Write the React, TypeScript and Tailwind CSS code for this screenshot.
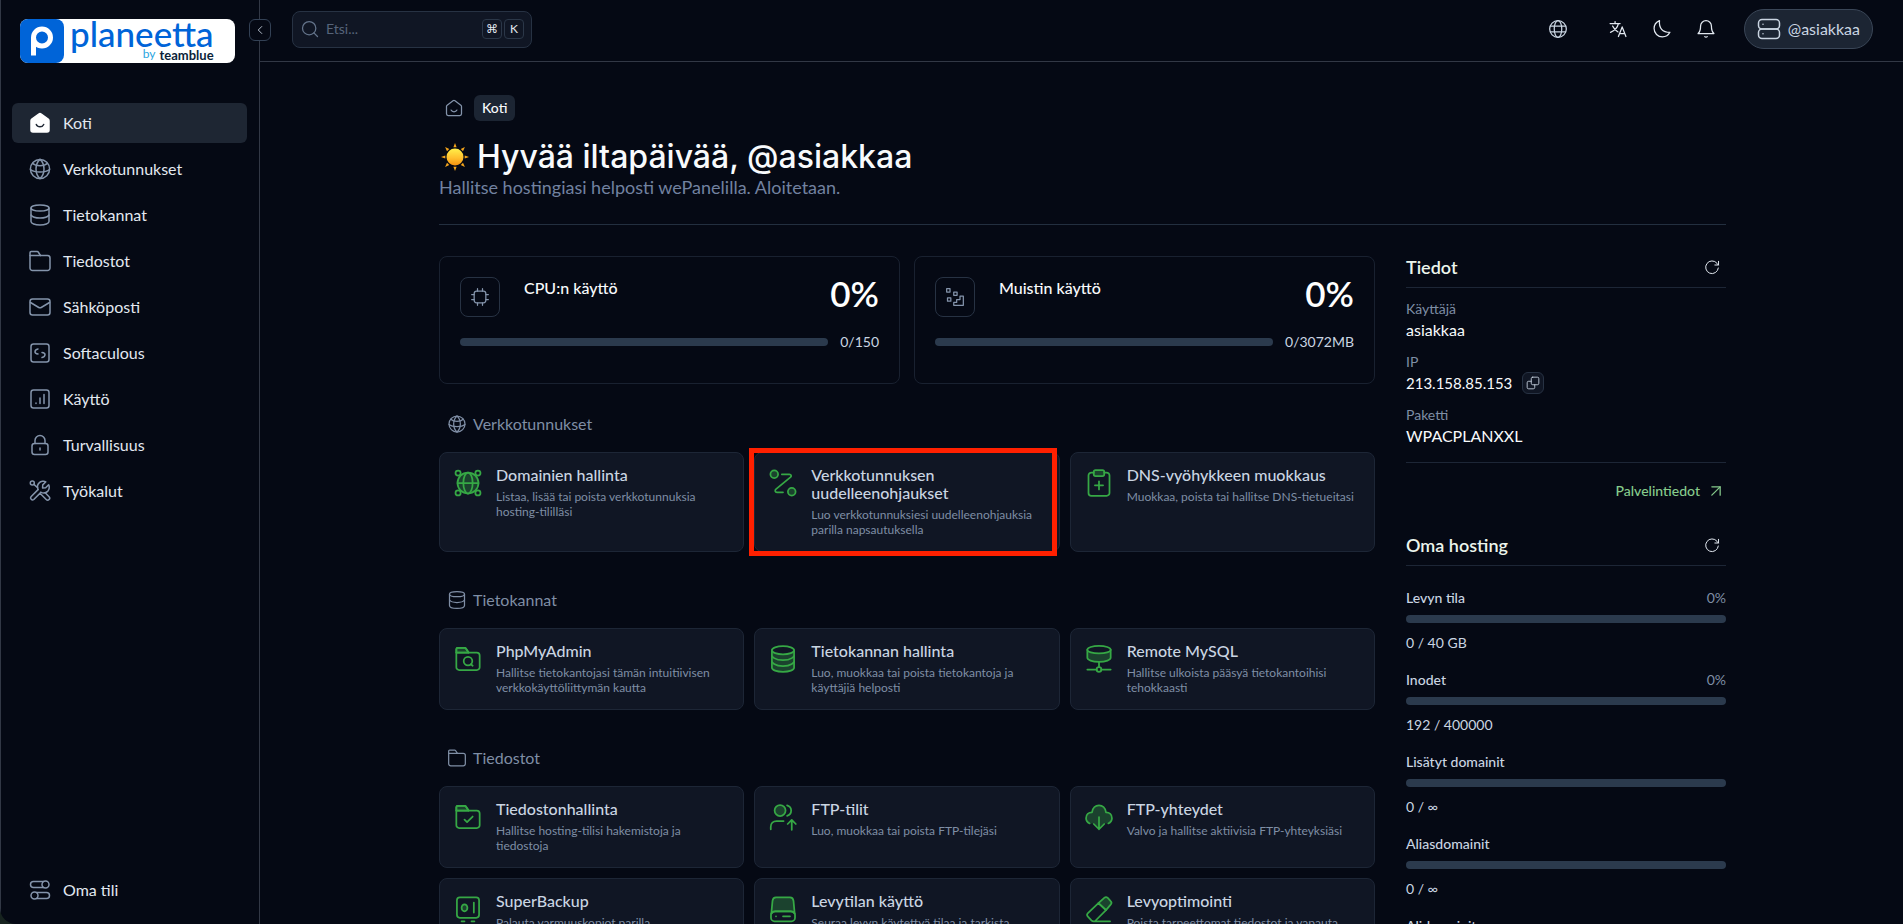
import { ReactNode } from 'react';
import { ArrowUpRight, ChevronLeft, Search } from 'lucide-react';

type IconProps = { className?: string };

// Shared stroke icon wrapper, everything is drawn on a 24x24 grid
function Icon({ className = 'size-6', children }: { className?: string; children: ReactNode }) {
  return (
    <svg
      viewBox="0 0 24 24"
      fill="none"
      stroke="currentColor"
      strokeWidth="1.5"
      strokeLinecap="round"
      strokeLinejoin="round"
      aria-hidden="true"
      className={`shrink-0 ${className}`}
    >
      {children}
    </svg>
  );
}

const HomeIcon = ({ className }: IconProps) => (
  <Icon className={className}>
    <path d="M3 10.2a2 2 0 0 1 .8-1.6l7-5.2a2 2 0 0 1 2.4 0l7 5.2a2 2 0 0 1 .8 1.6V19a2 2 0 0 1-2 2H5a2 2 0 0 1-2-2z" />
    <path d="M8.5 14.5s1 2 3.5 2 3.5-2 3.5-2" />
  </Icon>
);

const HomeSolidIcon = ({ className }: IconProps) => (
  <Icon className={className}>
    <path
      fill="currentColor"
      d="M3 9.8a2 2 0 0 1 .8-1.6l7-5.2a2 2 0 0 1 2.4 0l7 5.2a2 2 0 0 1 .8 1.6V19a2 2 0 0 1-2 2H5a2 2 0 0 1-2-2z"
    />
    <path stroke="#1e2633" d="M8.3 13.5s1 2.3 3.7 2.3 3.7-2.3 3.7-2.3" />
  </Icon>
);

const GlobeIcon = ({ className }: IconProps) => (
  <Icon className={className}>
    <circle cx="12" cy="12" r="9.6" />
    <path d="M2.5 12.5s3 2.5 9.5 2.5 9.5-2.5 9.5-2.5M4.6 6.3S7 8.8 12 8.8s7.4-2.5 7.4-2.5" />
    <path d="M12 2.4S8 6 8 12s4 9.6 4 9.6M12 2.4S16 6 16 12s-4 9.6-4 9.6" />
  </Icon>
);

const WorldIcon = ({ className }: IconProps) => (
  <Icon className={className}>
    <circle cx="12" cy="12" r="10" />
    <ellipse cx="12" cy="12" rx="4.5" ry="10" />
    <path d="M3 8.5h18M3 15.5h18" />
  </Icon>
);

const DatabaseIcon = ({ className }: IconProps) => (
  <Icon className={className}>
    <ellipse cx="12" cy="5" rx="9" ry="3" />
    <path d="M3 5v13.5C3 20.5 7 22 12 22s9-1.5 9-3.5V5" />
    <path d="M3 12s2 3 9 3 9-3 9-3" />
  </Icon>
);

const FolderIcon = ({ className, children }: IconProps & { children?: ReactNode }) => (
  <Icon className={className}>
    <path d="M2 6.5h17.5A2.5 2.5 0 0 1 22 9v10a2.5 2.5 0 0 1-2.5 2.5h-15A2.5 2.5 0 0 1 2 19z" />
    <path d="M2 6.5V3.7c0-.7.5-1.2 1.2-1.2h6c.4 0 .8.2 1 .5l2.3 3.5" />
    {children}
  </Icon>
);

const MailIcon = ({ className }: IconProps) => (
  <Icon className={className}>
    <rect x="2" y="4" width="20" height="16" rx="2.5" />
    <path d="m2.5 7.5 8.3 5a2.4 2.4 0 0 0 2.4 0l8.3-5" />
  </Icon>
);

const CodeIcon = ({ className }: IconProps) => (
  <Icon className={className}>
    <rect x="3" y="3" width="18" height="18" rx="2.5" />
    <path d="M10 8c-1.5.3-3 1.5-3 3 0 1.2 1.5 1.8 3 2M14 16.5c1.5-.3 3-1.5 3-3 0-1.2-1.5-1.8-3-2" />
  </Icon>
);

const ChartIcon = ({ className }: IconProps) => (
  <Icon className={className}>
    <rect x="3" y="3" width="18" height="18" rx="2.5" />
    <path d="M8 16.5V16M12 16.5V11M16 16.5V7.5" />
  </Icon>
);

const LockIcon = ({ className }: IconProps) => (
  <Icon className={className}>
    <rect x="4" y="10.5" width="16" height="11" rx="2.5" />
    <path d="M7 10.5V7.5a5 5 0 0 1 10 0v3M12 15v2" />
  </Icon>
);

const ToolsIcon = ({ className }: IconProps) => (
  <Icon className={className}>
    <path d="M10.05 10.6 3 17.7a2 2 0 0 0 2.8 2.8l7.1-7.1M17.2 13.8l3.9 3.9a2 2 0 0 1-2.9 2.8L12 14.3" />
    <circle cx="4.3" cy="4" r="2" />
    <path d="m5.8 5.4 3.9 3.4" />
    <path d="M10.05 10.6c-.8-2.1-.7-5 1.1-6.7 1.7-1.7 4.9-2.1 6.7-1.1l-3.1 3.1-.2 3.1 3.1-.3 3-3c1.1 1.8.7 5-1 6.7-1.8 1.7-4.6 1.9-6.8 1" />
  </Icon>
);

const AccountIcon = ({ className }: IconProps) => (
  <Icon className={className}>
    <path d="M15.5 3.5h-10a3 3 0 0 0 0 6h10M8.5 14.5h10a3 3 0 0 1 0 6h-10" />
    <circle cx="17.5" cy="6.5" r="3.5" />
    <circle cx="6.5" cy="17.5" r="3.5" />
  </Icon>
);

const TranslateIcon = ({ className }: IconProps) => (
  <Icon className={className}>
    <path d="M2.5 5.5h12M8.5 3v2.5M12.5 5.5c-1 4.5-5 8.5-9.5 10.5M5.5 8.5c1.3 3 4 5.5 6.5 7" />
    <path d="m12.5 21 4.5-11.5L21.5 21M14 17.5h6" />
  </Icon>
);

const MoonIcon = ({ className }: IconProps) => (
  <Icon className={className}>
    <path d="M2.5 11.5c0 5.5 4.5 10 10 10 3.9 0 7.3-2.2 9-5.5-8.9 0-13.5-5-12.5-14-4 1.7-6.5 5.3-6.5 9.5z" />
  </Icon>
);

const BellIcon = ({ className }: IconProps) => (
  <Icon className={className}>
    <path d="M12 2a6.5 6.5 0 0 0-6.5 6.5c0 6.5-3 9-3 9h19s-3-2.5-3-9A6.5 6.5 0 0 0 12 2z" />
    <path d="M10.5 21.2s.5.5 1.5.5 1.5-.5 1.5-.5" />
  </Icon>
);

const ServerIcon = ({ className }: IconProps) => (
  <Icon className={className}>
    <rect x="1.5" y="2.5" width="21" height="9.5" rx="3.5" />
    <rect x="1.5" y="12" width="21" height="9.5" rx="3.5" />
    <path d="M6 7.3h.01M6 16.8h.01" />
  </Icon>
);

const RefreshIcon = ({ className }: IconProps) => (
  <Icon className={className}>
    <path d="M21.5 13.5A9.5 9.5 0 1 1 19.5 6.5L21.5 9" />
    <path d="M21.8 3.5V9h-5.5" />
  </Icon>
);

const CopyIcon = ({ className }: IconProps) => (
  <Icon className={className}>
    <rect x="9" y="2" width="13" height="13" rx="2.5" />
    <path d="M9 9H4.5A2.5 2.5 0 0 0 2 11.5v8A2.5 2.5 0 0 0 4.5 22h8a2.5 2.5 0 0 0 2.5-2.5V15" />
  </Icon>
);

const CpuIcon = ({ className }: IconProps) => (
  <Icon className={className}>
    <rect x="5" y="5" width="14" height="14" rx="3" />
    <path d="M9 5V2M15 5V2M9 22v-3M15 22v-3M5 9H2M5 15H2M22 9h-3M22 15h-3" />
  </Icon>
);

const MemoryIcon = ({ className }: IconProps) => (
  <Icon className={className}>
    <path d="M2 2h4v4H2zM10.5 6h4v4h-4zM3 13h4v4H3z" />
    <path d="M10.5 22v-3.5H14V15h4v-4h4v11z" />
  </Icon>
);

const soft = { fill: 'currentColor', fillOpacity: 0.3 };

const DomainsIcon = () => (
  <Icon className="size-7">
    <circle cx="12" cy="12" r="9" {...soft} />
    <ellipse cx="12" cy="12" rx="4" ry="9" />
    <path d="M3 12h18" />
    <g fill="#101624">
      <circle cx="3.5" cy="3.5" r="2.2" />
      <circle cx="20.5" cy="3.5" r="2.2" />
      <circle cx="3.5" cy="20.5" r="2.2" />
      <circle cx="20.5" cy="20.5" r="2.2" />
    </g>
  </Icon>
);

const RedirectIcon = () => (
  <Icon className="size-7">
    <circle cx="4.5" cy="4.5" r="3.3" {...soft} />
    <circle cx="19.5" cy="19.5" r="3.3" {...soft} />
    <path d="M11 4.5h6.5c1.5 0 2 1.5 1 2.5L6 17.3c-1.2 1-.8 2.7.8 2.7H12" />
  </Icon>
);

const DnsIcon = () => (
  <Icon className="size-7">
    <path d="M7.5 3h-2A2.5 2.5 0 0 0 3 5.5v15A2.5 2.5 0 0 0 5.5 23h13a2.5 2.5 0 0 0 2.5-2.5v-15A2.5 2.5 0 0 0 18.5 3h-2" />
    <rect x="7.5" y="1" width="9" height="5" rx="1.5" {...soft} />
    <path d="M12 10.5v7M8.5 14h7" />
  </Icon>
);

const FolderTab = () => <path d="M2 6.5V3.7c0-.7.5-1.2 1.2-1.2h6c.4 0 .8.2 1 .5l2.3 3.5z" {...soft} />;

const PhpMyAdminIcon = () => (
  <FolderIcon className="size-7">
    <FolderTab />
    <circle cx="12" cy="13.8" r="3.7" />
    <path d="m14.5 16.5 1.5 1.3" />
  </FolderIcon>
);

const FileManagerIcon = () => (
  <FolderIcon className="size-7">
    <FolderTab />
    <path d="m9 14.2 2.2 2.2 4.8-4.8" />
  </FolderIcon>
);

const DatabasesIcon = () => (
  <Icon className="size-7">
    <path d="M2.5 4.5v15c0 2 4 3.5 9.5 3.5s9.5-1.5 9.5-3.5v-15" {...soft} />
    <ellipse cx="12" cy="4.5" rx="9.5" ry="3.5" fill="#101624" />
    <path d="M2.5 9.5s2 3.5 9.5 3.5 9.5-3.5 9.5-3.5M2.5 14.5s2 3.5 9.5 3.5 9.5-3.5 9.5-3.5" />
  </Icon>
);

const RemoteMysqlIcon = () => (
  <Icon className="size-7">
    <path d="M2 4v7c0 1.7 4 3.5 10 3.5s10-1.8 10-3.5V4" {...soft} />
    <ellipse cx="12" cy="4" rx="10" ry="3.2" fill="#101624" />
    <path d="M12 14.5V19M2 21h8M14 21h8" />
    <circle cx="12" cy="21" r="2" />
  </Icon>
);

const FtpAccountsIcon = () => (
  <Icon className="size-7">
    <circle cx="9.5" cy="6.5" r="4.7" {...soft} />
    <path d="M15.5 2s3.5 1 3.5 4.5-3.5 4.5-3.5 4.5M1.5 22.5v-2c0-3 2-5 5-5h6" />
    <path d="M19.5 23v-8.5M16 18l3.5-3.5L23 18" />
  </Icon>
);

const FtpConnectionsIcon = () => (
  <Icon className="size-7">
    <path
      d="M4 17.5C2 16.5.9 15 .9 13c0-3 2.1-5 5.1-5 .5-3.7 3-6 6-6s5.5 2.3 6 6c3 0 5.1 2 5.1 5 0 2-1.1 3.5-3.1 4.5h-3.500L12 22.500 7.500 17.500z"
      fill="currentColor"
      fillOpacity="0.3"
      stroke="none"
    />
    <path d="M4 17.5C2 16.5.9 15 .9 13c0-3 2.1-5 5.1-5 .5-3.7 3-6 6-6s5.5 2.3 6 6c3 0 5.1 2 5.1 5 0 2-1.1 3.5-3.1 4.5" />
    <path d="M12 12v10.5M7.5 18l4.5 4.5 4.5-4.5" />
  </Icon>
);

const BackupIcon = () => (
  <Icon className="size-7">
    <rect x="2.5" y="2" width="19" height="17.5" rx="2.5" />
    <path d="M17 6.5V15M6.5 22.5H9M15 22.5h2.5" />
    <ellipse cx="9" cy="11" rx="2.5" ry="3" {...soft} />
  </Icon>
);

const DiskUsageIcon = () => (
  <Icon className="size-7">
    <path d="M2 16 3 5c.2-1.8 1.3-3 3-3h12c1.7 0 2.8 1.2 3 3l1 11c-1-1.5-2-2-3.5-2h-13C4 14 3 14.5 2 16z" {...soft} />
    <rect x="1.7" y="14" width="20.6" height="8.5" rx="3" />
    <path d="M6 18.3h.01M12 18.3h6" />
  </Icon>
);

const OptimizeIcon = () => (
  <Icon className="size-7">
    <path d="m11.5 7 5-4.5c1-.9 2-.9 3 0L22 5.2c1 1 1 2 0 3L18 13z" {...soft} />
    <path d="M11.5 7l-9 8.5c-1 1-1 2 0 3l3 3.2c.5.5 1 .8 1.8.8h1.2L18 13zM8.5 22.5h13" />
  </Icon>
);

const SunIcon = ({ className }: IconProps) => (
  <svg viewBox="0 0 28 28" aria-hidden="true" className={`shrink-0 ${className}`}>
    <defs>
      <linearGradient id="sunFill" x1="0" y1="0" x2="0" y2="1">
        <stop offset="0" stopColor="#fff04a" />
        <stop offset="0.55" stopColor="#ffc02e" />
        <stop offset="1" stopColor="#f5920f" />
      </linearGradient>
    </defs>
    {[0, 45, 90, 135, 180, 225, 270, 315].map((angle) => (
      <path key={angle} d="M14 0l1.6 4.3h-3.2z" fill="#f5a51c" transform={`rotate(${angle} 14 14)`} />
    ))}
    <circle cx="14" cy="14" r="8.5" fill="url(#sunFill)" />
  </svg>
);

const navItems = [
  { label: 'Koti', icon: HomeSolidIcon, active: true },
  { label: 'Verkkotunnukset', icon: GlobeIcon },
  { label: 'Tietokannat', icon: DatabaseIcon },
  { label: 'Tiedostot', icon: FolderIcon },
  { label: 'Sähköposti', icon: MailIcon },
  { label: 'Softaculous', icon: CodeIcon },
  { label: 'Käyttö', icon: ChartIcon },
  { label: 'Turvallisuus', icon: LockIcon },
  { label: 'Työkalut', icon: ToolsIcon },
];

const stats = [
  { title: 'CPU:n käyttö', percent: 0, usage: '0/150', icon: CpuIcon },
  { title: 'Muistin käyttö', percent: 0, usage: '0/3072MB', icon: MemoryIcon },
];

const sections = [
  {
    title: 'Verkkotunnukset',
    icon: GlobeIcon,
    tools: [
      { title: 'Domainien hallinta', text: 'Listaa, lisää tai poista verkkotunnuksia hosting-tililläsi', icon: DomainsIcon },
      {
        title: 'Verkkotunnuksen uudelleenohjaukset',
        text: 'Luo verkkotunnuksiesi uudelleenohjauksia parilla napsautuksella',
        icon: RedirectIcon,
        highlighted: true,
      },
      { title: 'DNS-vyöhykkeen muokkaus', text: 'Muokkaa, poista tai hallitse DNS-tietueitasi', icon: DnsIcon },
    ],
  },
  {
    title: 'Tietokannat',
    icon: DatabaseIcon,
    tools: [
      { title: 'PhpMyAdmin', text: 'Hallitse tietokantojasi tämän intuitiivisen verkkokäyttöliittymän kautta', icon: PhpMyAdminIcon },
      { title: 'Tietokannan hallinta', text: 'Luo, muokkaa tai poista tietokantoja ja käyttäjiä helposti', icon: DatabasesIcon },
      { title: 'Remote MySQL', text: 'Hallitse ulkoista pääsyä tietokantoihisi tehokkaasti', icon: RemoteMysqlIcon },
    ],
  },
  {
    title: 'Tiedostot',
    icon: FolderIcon,
    tools: [
      { title: 'Tiedostonhallinta', text: 'Hallitse hosting-tilisi hakemistoja ja tiedostoja', icon: FileManagerIcon },
      { title: 'FTP-tilit', text: 'Luo, muokkaa tai poista FTP-tilejäsi', icon: FtpAccountsIcon },
      { title: 'FTP-yhteydet', text: 'Valvo ja hallitse aktiivisia FTP-yhteyksiäsi', icon: FtpConnectionsIcon },
      { title: 'SuperBackup', text: 'Palauta varmuuskopiot parilla napsautuksella', icon: BackupIcon },
      { title: 'Levytilan käyttö', text: 'Seuraa levyn käytettyä tilaa ja tarkista tiedostot', icon: DiskUsageIcon },
      { title: 'Levyoptimointi', text: 'Poista tarpeettomat tiedostot ja vapauta tilaa', icon: OptimizeIcon },
    ],
  },
];

const quotas = [
  { label: 'Levyn tila', value: '0 / 40 GB', percent: 0 },
  { label: 'Inodet', value: '192 / 400000', percent: 0 },
  { label: 'Lisätyt domainit', value: '0 / ∞' },
  { label: 'Aliasdomainit', value: '0 / ∞' },
  { label: 'Alidomainit', value: '0 / ∞' },
];

function ProgressBar({ label, percent = 0 }: { label: string; percent?: number }) {
  return (
    <div
      role="progressbar"
      aria-label={label}
      aria-valuenow={percent}
      className="h-2 w-full overflow-hidden rounded-full bg-[#2b3a4d]"
    >
      <div className="h-full bg-[#36a845]" style={{ width: `${percent}%` }} />
    </div>
  );
}

function Logo() {
  return (
    <a href="#" className="flex h-11 w-[215px] rounded-lg bg-white">
      <span className="flex w-11 shrink-0 items-center justify-center rounded-lg bg-[#0064d8]">
        <svg viewBox="0 0 44 44" fill="none" stroke="#fff" strokeWidth="5" aria-hidden="true" className="size-11">
          <circle cx="22" cy="18.5" r="8.5" />
          <path d="M13.5 18.5V36.5" />
        </svg>
      </span>
      <span className="flex flex-col items-end pl-1.5">
        <span className="text-[35px] leading-[29px] font-medium text-[#0064d8]">planeetta</span>
        <span className="flex gap-1 text-[13px] leading-[14px] font-bold text-[#0b1f3a]">
          <span className="text-xs leading-3 font-normal text-[#2aa5e0]">by</span>
          teamblue
        </span>
      </span>
    </a>
  );
}

function Sidebar() {
  return (
    <aside className="relative flex w-[260px] shrink-0 flex-col border-x border-[#323845]">
      <div className="pt-[19px] pl-[19px]">
        <Logo />
      </div>
      <button
        type="button"
        aria-label="Piilota valikko"
        className="absolute top-[19px] -right-3 z-10 flex size-[22px] items-center justify-center rounded-md border border-[#334155] bg-[#050914] text-slate-300"
      >
        <ChevronLeft className="size-3.5" strokeWidth={1.5} />
      </button>

      <nav className="mt-10 flex flex-col gap-1.5 pr-3 pl-[11px]">
        {navItems.map(({ label, icon: NavIcon, active }) => (
          <a
            key={label}
            href="#"
            className={`flex h-10 items-center gap-[11px] rounded-md pl-4 text-base text-slate-200 ${active ? 'bg-[#1e2633]' : ''}`}
          >
            <NavIcon className={active ? 'size-6 text-white' : 'size-6 text-[#8494ab]'} />
            {label}
          </a>
        ))}
      </nav>

      <div className="mt-auto pr-3 pb-3.5 pl-[11px]">
        <a href="#" className="flex h-10 items-center gap-[11px] pl-4 text-base text-slate-200">
          <AccountIcon className="size-6 text-[#8494ab]" />
          Oma tili
        </a>
      </div>
    </aside>
  );
}

function Header() {
  return (
    <header className="flex h-[62px] shrink-0 items-center justify-between border-b border-[#323845] pr-[30px] pb-[3px] pl-8">
      <div className="flex h-[37px] w-60 items-center rounded-lg border border-[#273243] bg-[#101624] px-[7px]">
        <Search className="size-5 shrink-0 text-[#64748b]" strokeWidth={1.5} />
        <input
          type="search"
          aria-label="Etsi"
          placeholder="Etsi..."
          className="ml-1.5 w-full min-w-0 bg-transparent text-sm text-slate-200 outline-none placeholder:text-[#56647a]"
        />
        <span className="flex gap-0.5">
          <kbd className="flex size-5 items-center justify-center rounded border border-[#2b3748] font-[Lato,'DejaVu_Sans',sans-serif] text-xs text-slate-200">⌘</kbd>
          <kbd className="flex size-5 items-center justify-center rounded border border-[#2b3748] font-[Lato,sans-serif] text-xs text-slate-200">K</kbd>
        </span>
      </div>

      <div className="flex items-center text-slate-200">
        <button type="button" aria-label="Sivusto" className="text-slate-300">
          <WorldIcon className="size-5" />
        </button>
        <button type="button" aria-label="Kieli" className="ml-10">
          <TranslateIcon className="size-5" />
        </button>
        <button type="button" aria-label="Tumma tila" className="ml-6">
          <MoonIcon className="size-5" />
        </button>
        <button type="button" aria-label="Ilmoitukset" className="ml-6">
          <BellIcon className="size-5" />
        </button>
        <button
          type="button"
          className="ml-7 flex h-10 items-center gap-[7px] rounded-full border border-[#3a4657] bg-[#1c2533] px-3 text-base text-slate-300"
        >
          <ServerIcon className="size-6" />
          @asiakkaa
        </button>
      </div>
    </header>
  );
}

function StatCard({ title, percent, usage, icon: StatIcon }: (typeof stats)[number]) {
  return (
    <div className="rounded-lg border border-[#192130] px-5 pt-5 pb-8">
      <div className="flex h-10 items-start">
        <span className="flex size-10 items-center justify-center rounded-lg border border-[#273243] text-[#8494ab]">
          <StatIcon className="size-5" />
        </span>
        <h2 className="ml-6 text-base leading-[22px] font-medium text-slate-50">{title}</h2>
        <span className="ml-auto text-[35px] leading-8 font-semibold text-white">{percent}%</span>
      </div>
      <div className="mt-4 flex items-center gap-3 text-sm leading-[18px] text-slate-300">
        <ProgressBar label={title} percent={percent} />
        {usage}
      </div>
    </div>
  );
}

function Details() {
  return (
    <section>
      <div className="flex items-center justify-between border-b border-[#1d2636] pr-1.5 pb-[9px]">
        <h2 className="text-lg leading-[22px] font-semibold text-[#ecf5ec]">Tiedot</h2>
        <button type="button" aria-label="Päivitä tiedot" className="text-slate-200">
          <RefreshIcon className="size-4" />
        </button>
      </div>
      <dl className="mt-[11px] flex flex-col gap-[11px] border-b border-[#1d2636] pb-[15px]">
        <div>
          <dt className="text-sm leading-5 text-[#7f8ea5]">Käyttäjä</dt>
          <dd className="text-base leading-[22px] text-slate-50">asiakkaa</dd>
        </div>
        <div>
          <dt className="text-sm leading-5 text-[#7f8ea5]">IP</dt>
          <dd className="flex items-center gap-2.5 text-[15px] leading-[22px] text-slate-50">
            213.158.85.153
            <button
              type="button"
              aria-label="Kopioi IP"
              className="flex size-[22px] items-center justify-center rounded-md border border-[#273243] bg-[#101624] text-slate-300"
            >
              <CopyIcon className="size-3.5" />
            </button>
          </dd>
        </div>
        <div>
          <dt className="text-sm leading-5 text-[#7f8ea5]">Paketti</dt>
          <dd className="text-base leading-[22px] text-slate-50">WPACPLANXXL</dd>
        </div>
      </dl>
      <a href="#" className="mt-[18px] flex items-center justify-end gap-1.5 text-sm leading-5 font-medium text-[#86cb8c]">
        Palvelintiedot
        <ArrowUpRight className="size-5" strokeWidth={1.5} />
      </a>
    </section>
  );
}

function Hosting() {
  return (
    <section className="mt-[33px]">
      <div className="flex items-center justify-between border-b border-[#1d2636] pr-1.5 pb-[9px]">
        <h2 className="text-lg leading-[22px] font-semibold text-[#ecf5ec]">Oma hosting</h2>
        <button type="button" aria-label="Päivitä hosting" className="text-slate-200">
          <RefreshIcon className="size-4" />
        </button>
      </div>
      <ul className="mt-[22px] flex flex-col gap-[17px] text-sm leading-5 text-slate-300">
        {quotas.map(({ label, value, percent }) => (
          <li key={label}>
            <div className="mb-[7px] flex justify-between">
              <span className="font-medium">{label}</span>
              {percent !== undefined && <span className="text-[#7f8ea5]">{percent}%</span>}
            </div>
            <ProgressBar label={label} percent={percent} />
            <p className="mt-2.5">{value}</p>
          </li>
        ))}
      </ul>
    </section>
  );
}

export default function App() {
  return (
    <div className="h-screen bg-[#17231f] font-[Lato,sans-serif]">
      <div className="flex h-full overflow-hidden rounded-bl-2xl bg-[#050914]">
        <Sidebar />
        <div className="flex min-w-0 flex-1 flex-col">
          <Header />
          <main className="flex-1 overflow-hidden pl-0.5">
            <div className="mx-auto max-w-[1287px] pt-[33px]">
              <nav aria-label="Murupolku" className="flex items-center gap-2.5 pl-[5px]">
                <a href="#" aria-label="Koti" className="text-[#8494ab]">
                  <HomeIcon className="size-5" />
                </a>
                <span className="rounded-md bg-[#1c2533] px-2 text-sm leading-[26px] font-medium text-slate-50">Koti</span>
              </nav>

              <div className="border-b border-[#232f3f] pb-[25px]">
                <h1 className="mt-[18px] flex items-center gap-2 pl-0.5 font-[Inter,sans-serif] text-[32px] leading-9 font-medium text-slate-50">
                  <SunIcon className="size-7" />
                  Hyvää iltapäivää, @asiakkaa
                </h1>
                <p className="text-lg leading-6 text-[#7282a0]">Hallitse hostingiasi helposti wePanelilla. Aloitetaan.</p>
              </div>

              <div className="mt-[31px] flex gap-[31px]">
                <div className="min-w-0 flex-1">
                  <div className="mb-7 grid grid-cols-2 gap-3.5">
                    {stats.map((stat) => (
                      <StatCard key={stat.title} {...stat} />
                    ))}
                  </div>

                  {sections.map(({ title, icon: SectionIcon, tools }) => (
                    <section key={title} className="mb-9">
                      <h2 className="mb-4 flex items-center gap-1.5 pl-2 text-base leading-6 text-[#7f8ea5]">
                        <SectionIcon className="size-5" />
                        {title}
                      </h2>
                      <div className="grid grid-cols-3 gap-2.5">
                        {tools.map(({ title: name, text, icon: ToolIcon, highlighted }) => (
                          <a
                            key={name}
                            href="#"
                            className="relative flex items-start gap-3.5 rounded-lg border border-[#1d2636] bg-[#101624] px-3.5 pt-[13px] pb-3.5"
                          >
                            <span className="mt-[3px] text-[#36a845]">
                              <ToolIcon />
                            </span>
                            <span className="block">
                              <span className="block text-base leading-[18px] font-medium text-slate-300">{name}</span>
                              <span className="mt-[5px] block text-xs leading-[15px] text-[#7f8ea5]">{text}</span>
                            </span>
                            {highlighted && (
                              <span className="pointer-events-none absolute -inset-y-[5px] right-0.5 -left-1.5 border-[5px] border-[#ff2000]" />
                            )}
                          </a>
                        ))}
                      </div>
                    </section>
                  ))}
                </div>

                <aside className="w-80 shrink-0">
                  <Details />
                  <Hosting />
                </aside>
              </div>
            </div>
          </main>
        </div>
      </div>
    </div>
  );
}
